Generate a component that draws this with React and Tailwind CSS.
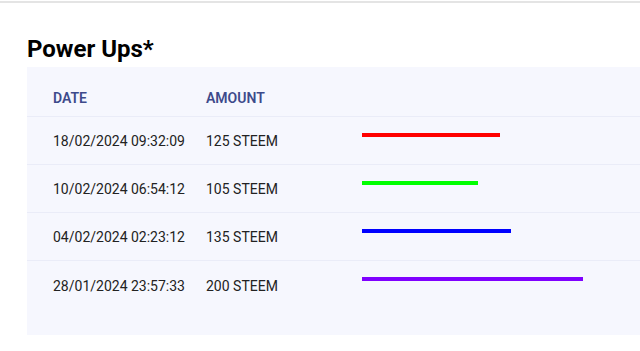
const powerUps = [
  { date: "18/02/2024 09:32:09", amount: 125, color: "bg-[#ff0000]" },
  { date: "10/02/2024 06:54:12", amount: 105, color: "bg-[#00ff00]" },
  { date: "04/02/2024 02:23:12", amount: 135, color: "bg-[#0000ff]" },
  { date: "28/01/2024 23:57:33", amount: 200, color: "bg-[#7f00ff]" },
];

export default function App() {
  return (
    <div className="min-h-screen bg-white pt-px font-['Roboto',sans-serif]">
      <div className="h-[2px] bg-[#e4e4e4]" />

      <h1 className="ml-[27px] mt-[31px] text-[24px] font-bold leading-[30px] text-black">
        Power Ups*
      </h1>

      {/* Table panel */}
      <div className="ml-[27px] mt-[3px] bg-[#f6f7fe] pt-[14px] pb-[26px]">
        <div className="flex h-[36px] items-center border-b border-[#eaecf8] pl-[26px] text-[14px] font-semibold text-[#3d4a8b]">
          <div className="w-[153px]">DATE</div>
          <div className="w-[156px]">AMOUNT</div>
        </div>

        {powerUps.map((row, i) => (
          <div
            key={row.date}
            className={`flex h-[48px] items-center pl-[26px] text-[14px] text-[#222222] ${
              i < powerUps.length - 1 ? "border-b border-[#eaecf8]" : ""
            }`}
          >
            <div className="w-[153px] pt-[2px]">{row.date}</div>
            <div className="w-[156px] pt-[2px]">{row.amount} STEEM</div>
            <div
              className={`mb-[12px] h-[4px] ${row.color}`}
              style={{ width: `${Math.round(row.amount * 1.105)}px` }}
            />
          </div>
        ))}
      </div>
    </div>
  );
}
